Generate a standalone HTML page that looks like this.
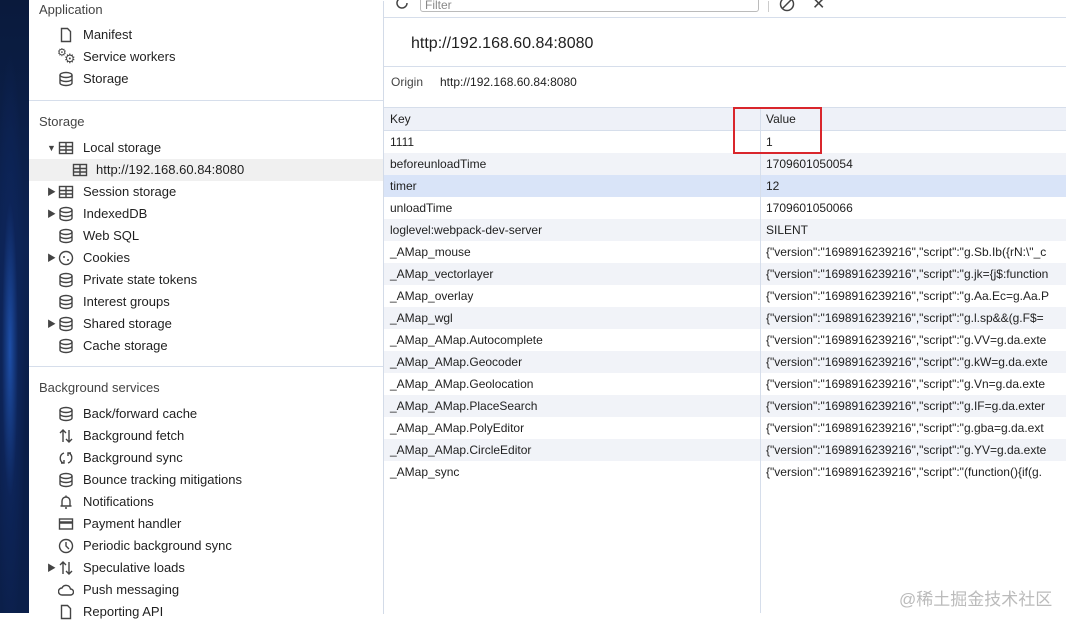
<!DOCTYPE html>
<html><head><meta charset="utf-8"><style>
*{margin:0;padding:0;box-sizing:border-box}
body{width:1066px;height:613px;overflow:hidden;position:relative;background:#fff;font-family:"Liberation Sans","Noto Sans CJK SC",sans-serif;color:#1f1f1f}
.strip{position:absolute;left:0;top:0;width:29px;height:613px;background:radial-gradient(ellipse at 10px 350px,#1e4fa8 0,#0d2458 30%,transparent 60%),linear-gradient(180deg,#0a1a3c,#0c2352 40%,#0a1d47 70%,#0b1f4a)}
.side{position:absolute;left:29px;top:1px;width:355px;height:613px;background:#fff;border-right:1px solid #d3dbe8}
.it{position:absolute;height:22px;line-height:22px;font-size:13px;white-space:nowrap}
.h{left:10px;color:#444;font-size:13px}
.ic{position:absolute;left:29px;top:3px;width:16px;height:16px}
.tx{position:absolute;left:54px}
.ar{position:absolute;left:18px;top:0;font-size:9px;color:#444}
.sep{position:absolute;left:0;width:354px;height:1px;background:#d6deeb}
.main{position:absolute;left:384px;top:1px;width:682px;height:613px}
.row{position:absolute;left:0;width:682px;height:22px;line-height:22px;font-size:12px;white-space:nowrap;overflow:hidden}
.row span{position:absolute;top:0}
.k{left:6px}.v{left:382px}
</style></head><body>
<div class="strip"></div>
<div class="side">
<svg width="0" height="0" style="position:absolute"><defs>
<g id="db" fill="none" stroke="#444" stroke-width="1.4"><ellipse cx="8" cy="4" rx="6" ry="2.5"/><path d="M2 4v8c0 1.4 2.7 2.5 6 2.5s6-1.1 6-2.5V4M2 8c0 1.4 2.7 2.5 6 2.5s6-1.1 6-2.5"/></g>
<g id="tb" fill="none" stroke="#444" stroke-width="1.4"><rect x="1.5" y="2.5" width="13" height="11"/><path d="M1.5 6.5h13M1.5 10h13M8 2.5v11"/></g>
<g id="fl" fill="none" stroke="#444" stroke-width="1.4"><path d="M3.5 1.5h6l3 3v10h-9z"/></g>
</defs></svg>
<div class="it h" style="top:-2px">Application</div>
<div class="it" style="top:23px;left:0"><svg class="ic"><use href="#fl"/></svg><span class="tx">Manifest</span></div>
<div class="it" style="top:45px;left:0"><span class="ic" style="font-size:11px;line-height:10px;color:#444;left:28px;top:2px">⚙</span><span class="ic" style="font-size:13px;line-height:12px;color:#444;left:35px;top:7px">⚙</span><span class="tx">Service workers</span></div>
<div class="it" style="top:67px;left:0"><svg class="ic"><use href="#db"/></svg><span class="tx">Storage</span></div>
<div class="sep" style="top:99px"></div>
<div class="it h" style="top:110px">Storage</div>
<div class="it" style="top:136px;left:0"><span class="ar">▼</span><svg class="ic"><use href="#tb"/></svg><span class="tx">Local storage</span></div>
<div class="it" style="top:158px;left:0;width:354px;background:#f0f0f0"><svg class="ic" style="left:43px"><use href="#tb"/></svg><span class="tx" style="left:67px">http://192.168.60.84:8080</span></div>
<div class="it" style="top:180px;left:0"><span class="ar">▶</span><svg class="ic"><use href="#tb"/></svg><span class="tx">Session storage</span></div>
<div class="it" style="top:202px;left:0"><span class="ar">▶</span><svg class="ic"><use href="#db"/></svg><span class="tx">IndexedDB</span></div>
<div class="it" style="top:224px;left:0"><svg class="ic"><use href="#db"/></svg><span class="tx">Web SQL</span></div>
<div class="it" style="top:246px;left:0"><span class="ar">▶</span><svg class="ic"><circle cx="8" cy="8" r="6.5" fill="none" stroke="#444" stroke-width="1.4"/><circle cx="6" cy="7" r="1" fill="#444"/><circle cx="10" cy="10" r="1" fill="#444"/></svg><span class="tx">Cookies</span></div>
<div class="it" style="top:268px;left:0"><svg class="ic"><use href="#db"/></svg><span class="tx">Private state tokens</span></div>
<div class="it" style="top:290px;left:0"><svg class="ic"><use href="#db"/></svg><span class="tx">Interest groups</span></div>
<div class="it" style="top:312px;left:0"><span class="ar">▶</span><svg class="ic"><use href="#db"/></svg><span class="tx">Shared storage</span></div>
<div class="it" style="top:334px;left:0"><svg class="ic"><use href="#db"/></svg><span class="tx">Cache storage</span></div>
<div class="sep" style="top:365px"></div>
<div class="it h" style="top:376px">Background services</div>
<div class="it" style="top:402px;left:0"><svg class="ic"><use href="#db"/></svg><span class="tx">Back/forward cache</span></div>
<div class="it" style="top:424px;left:0"><svg class="ic" fill="none" stroke="#444" stroke-width="1.4"><path d="M5 14V2M2 5l3-3 3 3M11 2v12M8 11l3 3 3-3"/></svg><span class="tx">Background fetch</span></div>
<div class="it" style="top:446px;left:0"><svg class="ic" fill="none" stroke="#444" stroke-width="1.4"><path d="M6 3a5.5 5.5 0 0 0-1 10M10 13a5.5 5.5 0 0 0 1-10M3 13h3v-3M13 3h-3v3"/></svg><span class="tx">Background sync</span></div>
<div class="it" style="top:468px;left:0"><svg class="ic"><use href="#db"/></svg><span class="tx">Bounce tracking mitigations</span></div>
<div class="it" style="top:490px;left:0"><svg class="ic" fill="none" stroke="#444" stroke-width="1.4"><path d="M4 12V7a4 4 0 0 1 8 0v5M2.5 12h11M7 14h2M8 1.5v1.5"/></svg><span class="tx">Notifications</span></div>
<div class="it" style="top:512px;left:0"><svg class="ic" fill="none" stroke="#444" stroke-width="1.4"><rect x="1.5" y="3" width="13" height="10"/><path d="M1.5 6.5h13" stroke-width="2.5"/></svg><span class="tx">Payment handler</span></div>
<div class="it" style="top:534px;left:0"><svg class="ic" fill="none" stroke="#444" stroke-width="1.4"><circle cx="8" cy="8" r="6.5"/><path d="M8 4v4l3 3"/></svg><span class="tx">Periodic background sync</span></div>
<div class="it" style="top:556px;left:0"><span class="ar">▶</span><svg class="ic" fill="none" stroke="#444" stroke-width="1.4"><path d="M5 14V2M2 5l3-3 3 3M11 2v12M8 11l3 3 3-3"/></svg><span class="tx">Speculative loads</span></div>
<div class="it" style="top:578px;left:0"><svg class="ic" fill="none" stroke="#444" stroke-width="1.4"><path d="M4 13h8.5a3 3 0 0 0 0-6 4.5 4.5 0 0 0-8.5-1A3.5 3.5 0 0 0 4 13z"/></svg><span class="tx">Push messaging</span></div>
<div class="it" style="top:600px;left:0"><svg class="ic"><use href="#fl"/></svg><span class="tx">Reporting API</span></div>
</div>
<div class="main">
<svg style="position:absolute;left:10px;top:-6px" width="16" height="16" fill="none" stroke="#444" stroke-width="1.5"><path d="M13 8a5 5 0 1 1-2-4"/></svg>
<div style="position:absolute;left:36px;top:-9px;width:339px;height:20px;border:1px solid #bbb;border-radius:3px;font-size:12px;color:#888;padding:6px 0 0 4px;line-height:12px">Filter</div>
<div style="position:absolute;left:384px;top:0;width:1px;height:11px;background:#ccc"></div>
<svg style="position:absolute;left:395px;top:-5px" width="16" height="16" fill="none" stroke="#444" stroke-width="1.5"><circle cx="8" cy="8" r="6.5"/><path d="M3.5 12.5l9-9"/></svg>
<div style="position:absolute;left:428px;top:-7px;font-size:16px;color:#444">✕</div>
<div style="position:absolute;left:0;top:16px;width:682px;height:1px;background:#d6deeb"></div>
<div style="position:absolute;left:27px;top:34px;font-size:16px;color:#1f1f1f">http://192.168.60.84:8080</div>
<div style="position:absolute;left:0;top:65px;width:682px;height:1px;background:#d6deeb"></div>
<div style="position:absolute;left:7px;top:74px;font-size:12px;color:#444">Origin</div>
<div style="position:absolute;left:56px;top:74px;font-size:12px;color:#1f1f1f">http://192.168.60.84:8080</div>
<div style="position:absolute;left:0;top:106px;width:682px;height:24px;background:#eef1f8;border-top:1px solid #d6deeb;border-bottom:1px solid #d6deeb"></div>
<div class="row" style="top:107px"><span class="k">Key</span><span class="v">Value</span></div>
<div class="row" style="top:130px"><span class="k">1111</span><span class="v">1</span></div>
<div class="row" style="top:152px;background:#f1f3f8"><span class="k">beforeunloadTime</span><span class="v">1709601050054</span></div>
<div class="row" style="top:174px;background:#d9e4f8"><span class="k">timer</span><span class="v">12</span></div>
<div class="row" style="top:196px"><span class="k">unloadTime</span><span class="v">1709601050066</span></div>
<div class="row" style="top:218px;background:#f1f3f8"><span class="k">loglevel:webpack-dev-server</span><span class="v">SILENT</span></div>
<div class="row" style="top:240px"><span class="k">_AMap_mouse</span><span class="v">{"version":"1698916239216","script":"g.Sb.Ib({rN:\"_c</span></div>
<div class="row" style="top:262px;background:#f1f3f8"><span class="k">_AMap_vectorlayer</span><span class="v">{"version":"1698916239216","script":"g.jk={j$:function</span></div>
<div class="row" style="top:284px"><span class="k">_AMap_overlay</span><span class="v">{"version":"1698916239216","script":"g.Aa.Ec=g.Aa.P</span></div>
<div class="row" style="top:306px;background:#f1f3f8"><span class="k">_AMap_wgl</span><span class="v">{"version":"1698916239216","script":"g.l.sp&amp;&amp;(g.F$=</span></div>
<div class="row" style="top:328px"><span class="k">_AMap_AMap.Autocomplete</span><span class="v">{"version":"1698916239216","script":"g.VV=g.da.exte</span></div>
<div class="row" style="top:350px;background:#f1f3f8"><span class="k">_AMap_AMap.Geocoder</span><span class="v">{"version":"1698916239216","script":"g.kW=g.da.exte</span></div>
<div class="row" style="top:372px"><span class="k">_AMap_AMap.Geolocation</span><span class="v">{"version":"1698916239216","script":"g.Vn=g.da.exte</span></div>
<div class="row" style="top:394px;background:#f1f3f8"><span class="k">_AMap_AMap.PlaceSearch</span><span class="v">{"version":"1698916239216","script":"g.IF=g.da.exter</span></div>
<div class="row" style="top:416px"><span class="k">_AMap_AMap.PolyEditor</span><span class="v">{"version":"1698916239216","script":"g.gba=g.da.ext</span></div>
<div class="row" style="top:438px;background:#f1f3f8"><span class="k">_AMap_AMap.CircleEditor</span><span class="v">{"version":"1698916239216","script":"g.YV=g.da.exte</span></div>
<div class="row" style="top:460px"><span class="k">_AMap_sync</span><span class="v">{"version":"1698916239216","script":"(function(){if(g.</span></div>
<div style="position:absolute;left:376px;top:107px;width:1px;height:505px;background:#d6deeb"></div>
<div style="position:absolute;left:349px;top:106px;width:89px;height:47px;border:2px solid #d9262c"></div>
<div style="position:absolute;left:515px;top:584px;font-size:17px;color:#bbb">@稀土掘金技术社区</div>
</div>
</body></html>
